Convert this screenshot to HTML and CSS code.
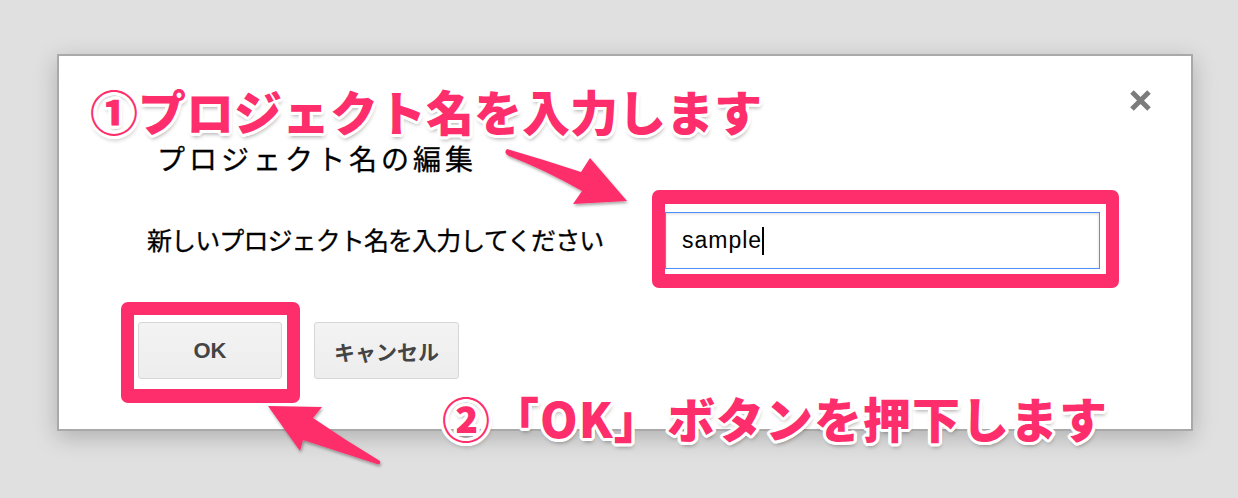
FILE: index.html
```html
<!DOCTYPE html>
<html lang="ja">
<head>
<meta charset="utf-8">
<title>プロジェクト名の編集</title>
<link rel="stylesheet" href="styles.css">
</head>
<body>
<div class="stage">
  <div class="dialog">
    <div class="topbar">
      <svg class="close" width="23" height="23" viewBox="0 0 23 23"><path d="M3 3 L20 20 M20 3 L3 20" stroke="#7b7b7b" stroke-width="5" stroke-linecap="butt"/></svg>
    </div>
    <div class="title">プロジェクト名の編集</div>
    <div class="field-row">
      <div class="label">新しいプロジェクト名を入力してください</div>
      <div class="highlight field-hl">
        <div class="input">sample<span class="caret"></span></div>
      </div>
    </div>
    <div class="actions">
      <div class="highlight ok-hl">
        <div class="btn">OK</div>
      </div>
      <div class="btn cancel">キャンセル</div>
    </div>
  </div>

  <svg class="arrows" width="1238" height="498" viewBox="0 0 1238 498">
    <defs>
      <filter id="ds" x="-20%" y="-20%" width="140%" height="140%">
        <feDropShadow dx="1" dy="2" stdDeviation="1.5" flood-color="#000" flood-opacity="0.35"/>
      </filter>
    </defs>
    <path filter="url(#ds)" fill="#fe2d6b" d="M627 201 L573 204 L582 191 Q545 170 509 156 Q503 153 507 149 Q545 160 581 172 L590 158 Z"/>
    <path filter="url(#ds)" fill="#fe2d6b" d="M268 406 L322 407 L313 418 Q345 440 380 461 Q381 465 377 464 Q340 452 303 440 L300 451 Z"/>
  </svg>

  <div class="note note1">①プロジェクト名を入力します</div>
  <div class="note note2">②「OK」<span class="thin"> </span>ボタンを押下します</div>
</div>
</body>
</html>
```

FILE: styles.css
```css
html, body {
  margin: 0;
  padding: 0;
}
body {
  background: #e0e0e0;
  font-family: "Noto Sans CJK JP", "Liberation Sans", sans-serif;
  color: #000;
}
.stage {
  position: relative;
  width: 1238px;
  height: 498px;
  overflow: hidden;
  padding-top: 54px;
  box-sizing: border-box;
}
.dialog {
  margin-left: 57px;
  width: 1136px;
  height: 377px;
  box-sizing: border-box;
  background: #fff;
  border: 2px solid #a9a9a9;
  box-shadow: 0 6px 22px rgba(0, 0, 0, 0.22);
}
.topbar {
  display: flex;
  justify-content: flex-end;
  padding: 33px 39px 0 0;
  height: 23px;
}
.close {
  display: block;
  filter: blur(0.4px);
}
.title {
  margin: 32px 0 0 98px;
  font-size: 28px;
  line-height: 28px;
  letter-spacing: 4px;
  white-space: nowrap;
  -webkit-text-stroke: 0.3px #000;
}
.field-row {
  display: flex;
  align-items: center;
  margin-top: 18px;
  padding-left: 88px;
}
.label {
  font-size: 25px;
  line-height: 25px;
  letter-spacing: -0.9px;
  width: 456px;
  margin-right: 49px;
  white-space: nowrap;
  -webkit-text-stroke: 0.3px #000;
}
.highlight {
  border-style: solid;
  border-color: #fe2d6b;
  border-radius: 7px;
  background: #fff;
}
.field-hl {
  border-width: 14px 13px;
  padding: 8px 6px 5px 0;
}
.input {
  width: 435px;
  height: 57px;
  box-sizing: border-box;
  border: 1px solid #4d90fe;
  box-shadow: inset 0 1px 3px rgba(0, 0, 0, 0.15);
  padding-left: 16px;
  font-family: "Liberation Sans", Arial, sans-serif;
  font-size: 23px;
  letter-spacing: 1px;
  line-height: 55px;
  display: flex;
  align-items: center;
}
.caret {
  display: inline-block;
  width: 2px;
  height: 28px;
  background: #000;
  margin-left: 0;
}
.actions {
  display: flex;
  align-items: flex-start;
  margin-top: 14px;
  padding-left: 62px;
}
.ok-hl {
  border-width: 13px 13px 14px 13px;
  padding: 7px 5px 10px 4px;
}
.btn {
  width: 144px;
  height: 57px;
  box-sizing: border-box;
  border: 1px solid #d6d6d6;
  border-radius: 3px;
  background: linear-gradient(#f3f3f3, #ededed);
  color: #444;
  font-family: "Liberation Sans", "Noto Sans CJK JP", sans-serif;
  font-weight: 700;
  font-size: 22px;
  display: flex;
  align-items: center;
  justify-content: center;
}
.cancel {
  width: 145px;
  margin-left: 14px;
  margin-top: 20px;
  font-family: "Noto Sans CJK JP", sans-serif;
  font-size: 21px;
}
.arrows {
  position: absolute;
  left: 0;
  top: 0;
  pointer-events: none;
}
.note {
  position: absolute;
  font-family: "Noto Sans CJK JP", sans-serif;
  font-weight: 900;
  font-size: 48px;
  line-height: 48px;
  color: #fe2d6b;
  white-space: nowrap;
  text-shadow:
    3px 0 0 #fff, -3px 0 0 #fff, 0 3px 0 #fff, 0 -3px 0 #fff,
    2px 2px 0 #fff, -2px 2px 0 #fff, 2px -2px 0 #fff, -2px -2px 0 #fff,
    3px 1px 0 #fff, -3px 1px 0 #fff, 3px -1px 0 #fff, -3px -1px 0 #fff,
    1px 3px 0 #fff, -1px 3px 0 #fff, 1px -3px 0 #fff, -1px -3px 0 #fff,
    1px 4px 4px rgba(0, 0, 0, 0.35);
}
.thin {
  font-size: 14px;
}
.note1 {
  left: 90px;
  top: 86px;
}
.note2 {
  left: 442px;
  top: 393px;
  letter-spacing: 1px;
}
```
